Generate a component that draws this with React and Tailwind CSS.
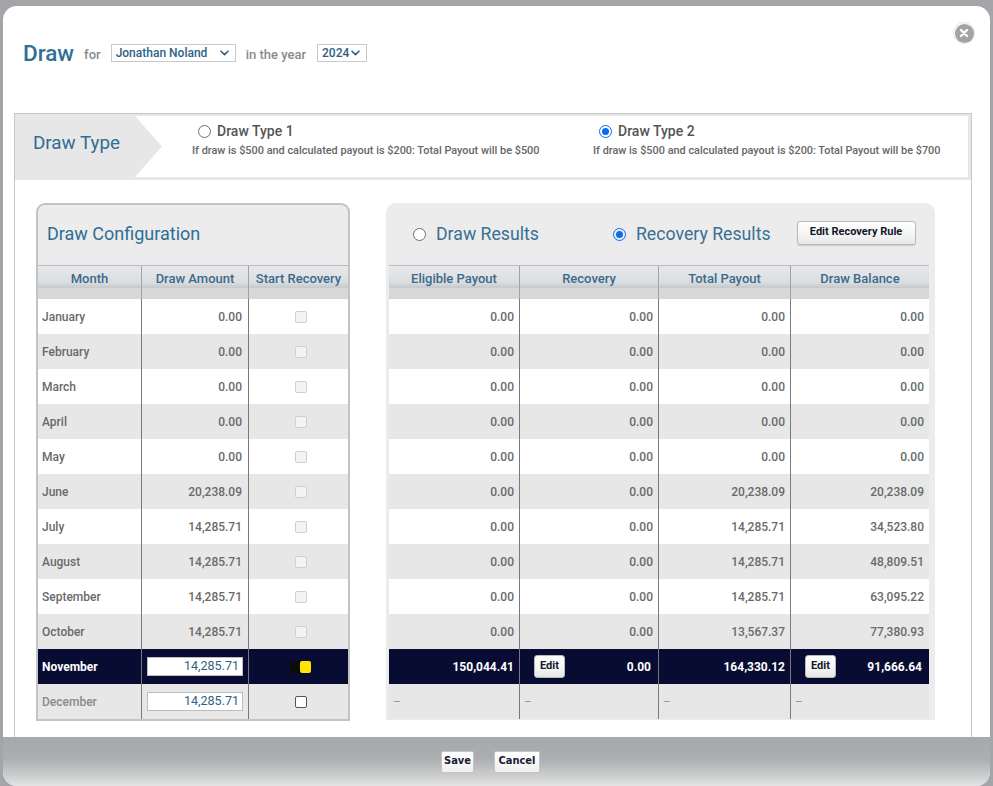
import React from 'react';

const rows = [
  { month: 'January', draw: '0.00', res: ['0.00', '0.00', '0.00', '0.00'] },
  { month: 'February', draw: '0.00', res: ['0.00', '0.00', '0.00', '0.00'] },
  { month: 'March', draw: '0.00', res: ['0.00', '0.00', '0.00', '0.00'] },
  { month: 'April', draw: '0.00', res: ['0.00', '0.00', '0.00', '0.00'] },
  { month: 'May', draw: '0.00', res: ['0.00', '0.00', '0.00', '0.00'] },
  { month: 'June', draw: '20,238.09', res: ['0.00', '0.00', '20,238.09', '20,238.09'] },
  { month: 'July', draw: '14,285.71', res: ['0.00', '0.00', '14,285.71', '34,523.80'] },
  { month: 'August', draw: '14,285.71', res: ['0.00', '0.00', '14,285.71', '48,809.51'] },
  { month: 'September', draw: '14,285.71', res: ['0.00', '0.00', '14,285.71', '63,095.22'] },
  { month: 'October', draw: '14,285.71', res: ['0.00', '0.00', '13,567.37', '77,380.93'] },
];

const headBg =
  'border-t border-[#b3bec6] bg-[linear-gradient(180deg,#e7e9eb_0%,#dadde0_50%,#c7cacd_66%,#d7d7d7_68%,#d7d7d7_100%)]';

const Chevron = () => (
  <svg width="9" height="6" viewBox="0 0 9 6" fill="none">
    <path d="M1 1.2 L4.5 4.6 L8 1.2" stroke="#2d6284" strokeWidth="1.6" strokeLinecap="round" strokeLinejoin="round" />
  </svg>
);

const Select = ({ label, className }) => (
  <div className={`h-[18px] border border-[#c9c9c9] flex items-center justify-between pl-[4px] pr-[6px] text-[12px] font-medium text-[#2d6284] ${className}`}>
    <span>{label}</span>
    <Chevron />
  </div>
);

const SmallButton = ({ children, className }) => (
  <button className={`bg-[linear-gradient(180deg,#ffffff_0%,#f4f4f4_60%,#e6e6e6_100%)] border border-[#b9b9b9] rounded-[3px] shadow-[0_1px_1px_rgba(0,0,0,0.15)] text-[11px] font-bold text-[#111827] ${className}`}>
    {children}
  </button>
);

const cell = 'border-r border-[#7a7a7a] flex items-center';

const DrawConfiguration = () => (
  <div className="w-[314px] h-[518px] shrink-0 border-2 border-[#c3c3c3] rounded-t-[9px] bg-[#ececec]">
    <div className="h-[60px] pl-[9px] pb-[3px] flex items-center text-[18px] text-[#2e6e94]">Draw Configuration</div>
    <div className={`grid grid-cols-[104px_107px_99px] h-[34px] ${headBg}`}>
      {['Month', 'Draw Amount', 'Start Recovery'].map((h, i) => (
        <div key={h} className={`pt-[3px] text-center text-[13px] font-medium text-[#3c6a8c] ${i < 2 ? 'border-r border-[#a3a3a3]' : ''}`}>
          {h}
        </div>
      ))}
    </div>
    {rows.map((r, i) => (
      <div key={r.month} className={`grid grid-cols-[104px_107px_99px] h-[35px] text-[12px] font-medium text-[#6a6a6a] ${i % 2 ? 'bg-[#e7e7e7]' : 'bg-white'}`}>
        <div className={`${cell} pl-[4px]`}>{r.month}</div>
        <div className={`${cell} justify-end pr-[6px]`}>{r.draw}</div>
        <div className="flex items-center justify-center pl-[4px]">
          <span className="w-[12px] h-[12px] rounded-[2px] border border-[#cfcfcf] bg-[#f4f4f4]" />
        </div>
      </div>
    ))}
    <div className="grid grid-cols-[104px_107px_99px] h-[35px] bg-[#080c33] text-[12px]">
      <div className={`${cell} pl-[4px] font-bold text-white`}>November</div>
      <div className={`${cell} pl-[5px]`}>
        <div className="w-[96px] h-[19px] bg-white border border-[#bdbdbd] flex items-center justify-end pr-[3px] text-[12.5px] text-[#2d6284]">14,285.71</div>
      </div>
      <div className="flex items-center justify-center pl-[4px]">
        <span className="w-[11px] h-[12px] bg-[#0b0b08]" />
        <span className="w-[11px] h-[12px] -ml-[1px] rounded-[2px] bg-[#ffe400]" />
      </div>
    </div>
    <div className="grid grid-cols-[104px_107px_99px] h-[35px] bg-[#e7e7e7] text-[12px]">
      <div className={`${cell} pl-[4px] font-medium text-[#8a8a8a]`}>December</div>
      <div className={`${cell} pl-[5px]`}>
        <div className="w-[96px] h-[19px] bg-white border border-[#bdbdbd] flex items-center justify-end pr-[3px] text-[12.5px] text-[#2d6284]">14,285.71</div>
      </div>
      <div className="flex items-center justify-center pl-[4px]">
        <span className="w-[12px] h-[12px] rounded-[2px] border border-[#555] bg-white" />
      </div>
    </div>
  </div>
);

const Radio = ({ checked }) =>
  checked ? (
    <span className="w-[13px] h-[13px] rounded-full border-[1.5px] border-[#0a6cf0] flex items-center justify-center shrink-0">
      <span className="w-[7px] h-[7px] rounded-full bg-[#0a6cf0]" />
    </span>
  ) : (
    <span className="w-[13px] h-[13px] rounded-full border border-[#6e6e6e] bg-white shrink-0" />
  );

const DrawResults = () => (
  <div className="w-[549px] h-[517px] shrink-0 bg-[#ececec] rounded-t-[10px] pl-[3px]">
    <div className="h-[62px] flex items-center pl-[24px]">
      <Radio />
      <span className="ml-[10px] text-[17.7px] text-[#3a6f93]">Draw Results</span>
      <span className="ml-[74px]"><Radio checked /></span>
      <span className="ml-[10px] text-[17.7px] text-[#3a6f93]">Recovery Results</span>
      <SmallButton className="ml-[26px] -mt-[3px] w-[119px] h-[24px]">Edit Recovery Rule</SmallButton>
    </div>
    <div className={`grid grid-cols-[131px_139px_132px_138px] w-[540px] h-[34px] ${headBg}`}>
      {['Eligible Payout', 'Recovery', 'Total Payout', 'Draw Balance'].map((h, i) => (
        <div key={h} className={`pt-[3px] text-center text-[13px] font-medium text-[#3c6a8c] ${i < 3 ? 'border-r border-[#a3a3a3]' : ''}`}>
          {h}
        </div>
      ))}
    </div>
    {rows.map((r, i) => (
      <div key={r.month} className={`grid grid-cols-[131px_139px_132px_138px] w-[540px] h-[35px] text-[12px] font-medium text-[#6a6a6a] ${i % 2 ? 'bg-[#e7e7e7]' : 'bg-white'}`}>
        {r.res.map((v, j) => (
          <div key={j} className={`flex items-center justify-end pr-[5px] ${j < 3 ? 'border-r border-[#7a7a7a]' : ''}`}>{v}</div>
        ))}
      </div>
    ))}
    <div className="grid grid-cols-[131px_139px_132px_138px] w-[540px] h-[35px] bg-[#080c33] text-[12px] font-bold text-white">
      <div className={`${cell} justify-end pr-[5px]`}>150,044.41</div>
      <div className={`${cell} justify-between pl-[14px] pr-[7px]`}>
        <SmallButton className="w-[31px] h-[23px]">Edit</SmallButton>
        <span>0.00</span>
      </div>
      <div className={`${cell} justify-end pr-[5px]`}>164,330.12</div>
      <div className="flex items-center justify-between pl-[14px] pr-[7px]">
        <SmallButton className="w-[31px] h-[23px]">Edit</SmallButton>
        <span>91,666.64</span>
      </div>
    </div>
    <div className="grid grid-cols-[131px_139px_132px_138px] w-[540px] h-[35px] bg-[#e7e7e7] text-[12px] text-[#9a9a9a]">
      {[0, 1, 2, 3].map((j) => (
        <div key={j} className={`flex items-center pl-[4px] ${j < 3 ? 'border-r border-[#7a7a7a]' : ''}`}>–</div>
      ))}
    </div>
  </div>
);

const DrawTypeOption = ({ label, note, checked, className }) => (
  <div className={className}>
    <div className="flex items-center pl-[6px] gap-[6px]">
      <Radio checked={checked} />
      <span className="text-[14px] font-medium text-[#555]">{label}</span>
    </div>
    <div className="mt-[1px] text-[10.9px] font-medium text-[#666]">{note}</div>
  </div>
);

export default function App() {
  return (
    <div className="w-[993px] h-[786px] bg-[#a4a5a9] pt-[6px] px-[3px] font-['Roboto',sans-serif] overflow-hidden">
      <div className="relative h-full bg-white rounded-[14px] flex flex-col overflow-hidden">
        <button className="absolute top-[16px] right-[15px] w-[22px] h-[22px] rounded-full border border-[#e4e4e4] bg-white flex items-center justify-center">
          <span className="w-[19px] h-[19px] rounded-full bg-[#a3a3a3] flex items-center justify-center">
            <svg width="10" height="10" viewBox="0 0 10 10">
              <path d="M2 2 L8 8 M8 2 L2 8" stroke="#fff" strokeWidth="2.4" strokeLinecap="round" />
            </svg>
          </span>
        </button>

        <div className="h-[107px] shrink-0 pt-[36px] pl-[20px]">
          <div className="flex items-center">
            <h1 className="text-[22.5px] leading-none font-medium text-[#2f6f95]">Draw</h1>
            <span className="ml-[10px] mt-[3px] text-[13px] font-medium text-[#8a8a8a]">for</span>
            <Select label="Jonathan Noland" className="ml-[10px] w-[125px]" />
            <span className="ml-[10px] mt-[3px] text-[13px] font-medium text-[#8a8a8a]">in the year</span>
            <Select label="2024" className="ml-[11px] w-[50px]" />
          </div>
        </div>

        <div className="flex-1 ml-[11px] mr-[18px] border border-b-0 border-[#c6c6c6] flex flex-col">
          <div className="h-[66px] shrink-0 bg-[#e7e7e7] flex">
            <div className="w-[120px] shrink-0 pl-[18px] pb-[8px] flex items-center text-[18.8px] text-[#2e6e94]">Draw Type</div>
            <div className="flex-1 bg-white mt-[2px] mb-[3px] mr-[3px] [clip-path:polygon(0_0,100%_0,100%_100%,0_100%,27px_50%)] flex pl-[57px] pt-[5px]">
              <DrawTypeOption
                className="w-[401px]"
                label="Draw Type 1"
                note="If draw is $500 and calculated payout is $200: Total Payout will be $500"
              />
              <DrawTypeOption
                checked
                label="Draw Type 2"
                note="If draw is $500 and calculated payout is $200: Total Payout will be $700"
              />
            </div>
          </div>

          <div className="flex-1 flex items-start pt-[23px] pl-[21px] gap-[36px]">
            <DrawConfiguration />
            <DrawResults />
          </div>
        </div>

        <div className="h-[49px] shrink-0 bg-[linear-gradient(180deg,#a6a8ab_0%,#acaeb1_45%,#d2d3d4_85%,#e2e2e2_100%)] flex items-center pl-[438px] gap-[20px]">
          <button className="w-[33px] h-[22px] bg-[linear-gradient(180deg,#ffffff_0%,#f0f0f0_100%)] border border-[#c4c4c4] rounded-[2px] text-[11px] font-bold text-[#1a1a33] font-['Liberation_Sans_Narrow','DejaVu_Sans_Condensed',sans-serif]">Save</button>
          <button className="w-[46px] h-[22px] bg-[linear-gradient(180deg,#ffffff_0%,#f0f0f0_100%)] border border-[#c4c4c4] rounded-[2px] text-[11px] font-bold text-[#1a1a33] font-['Liberation_Sans_Narrow','DejaVu_Sans_Condensed',sans-serif]">Cancel</button>
        </div>
      </div>
    </div>
  );
}
